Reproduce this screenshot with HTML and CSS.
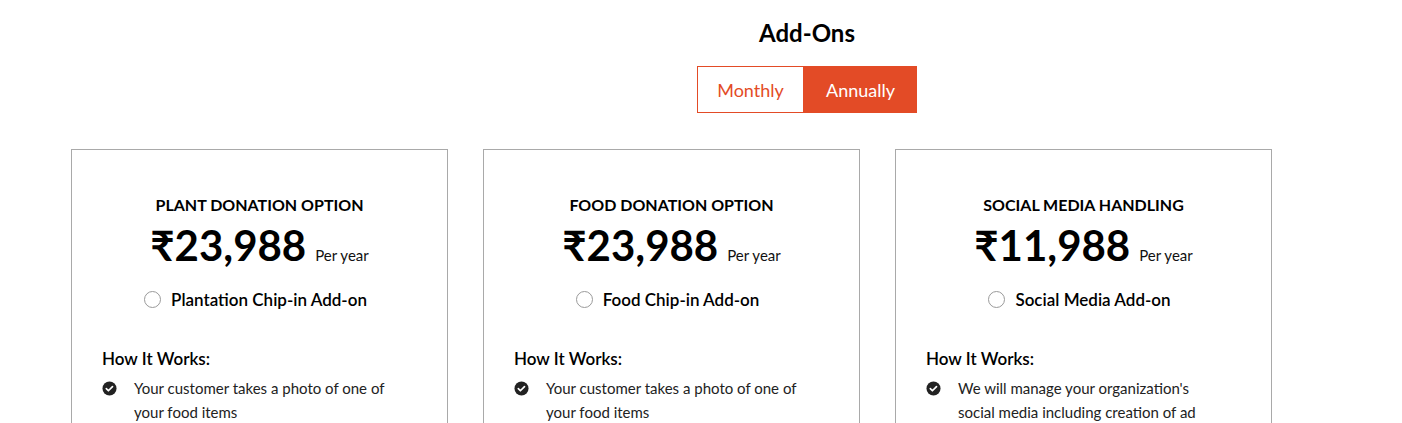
FILE: index.html
```html
<!DOCTYPE html>
<html lang="en">
<head>
<meta charset="utf-8">
<title>Add-Ons</title>
<link rel="stylesheet" href="styles.css">
</head>
<body>
<section class="addons">
  <header class="addons-head">
    <h2 class="addons-title">Add-Ons</h2>
    <div class="toggle">
      <button class="toggle-btn">Monthly</button>
      <button class="toggle-btn active">Annually</button>
    </div>
  </header>
  <div class="cards">
    <article class="card">
      <h3 class="card-title">PLANT DONATION OPTION</h3>
      <div class="price"><span class="amount">₹23,988</span><span class="period">Per year</span></div>
      <label class="option"><span class="radio"></span>Plantation Chip-in Add-on</label>
      <h4 class="how">How It Works:</h4>
      <ul class="steps">
        <li><svg class="check" viewBox="0 0 16 16"><circle cx="8" cy="8" r="7.5" fill="#222"/><path d="M4.6 8.2l2.2 2.2 4.4-4.4" fill="none" stroke="#fff" stroke-width="1.8" stroke-linecap="round" stroke-linejoin="round"/></svg><span>Your customer takes a photo of one of your food items</span></li>
      </ul>
    </article>
    <article class="card">
      <h3 class="card-title">FOOD DONATION OPTION</h3>
      <div class="price"><span class="amount">₹23,988</span><span class="period">Per year</span></div>
      <label class="option"><span class="radio"></span>Food Chip-in Add-on</label>
      <h4 class="how">How It Works:</h4>
      <ul class="steps">
        <li><svg class="check" viewBox="0 0 16 16"><circle cx="8" cy="8" r="7.5" fill="#222"/><path d="M4.6 8.2l2.2 2.2 4.4-4.4" fill="none" stroke="#fff" stroke-width="1.8" stroke-linecap="round" stroke-linejoin="round"/></svg><span>Your customer takes a photo of one of your food items</span></li>
      </ul>
    </article>
    <article class="card">
      <h3 class="card-title">SOCIAL MEDIA HANDLING</h3>
      <div class="price"><span class="amount">₹11,988</span><span class="period">Per year</span></div>
      <label class="option"><span class="radio"></span>Social Media Add-on</label>
      <h4 class="how">How It Works:</h4>
      <ul class="steps">
        <li><svg class="check" viewBox="0 0 16 16"><circle cx="8" cy="8" r="7.5" fill="#222"/><path d="M4.6 8.2l2.2 2.2 4.4-4.4" fill="none" stroke="#fff" stroke-width="1.8" stroke-linecap="round" stroke-linejoin="round"/></svg><span>We will manage your organization's social media including creation of ad posts and stories</span></li>
      </ul>
    </article>
  </div>
</section>
</body>
</html>
```

FILE: styles.css
```css
* { box-sizing: border-box; }
html, body { margin: 0; padding: 0; background: #fff; }
body {
  font-family: "Source Sans Pro", Lato, "Liberation Sans", sans-serif;
  color: #111;
}
.addons-head {
  padding-left: 212px;
  padding-top: 18px;
  display: flex;
  flex-direction: column;
  align-items: center;
}
.addons-title {
  margin: 0;
  font-size: 24px;
  line-height: 30px;
  font-weight: 700;
  color: #000;
}
.toggle {
  display: flex;
  margin-top: 18px;
}
.toggle-btn {
  font-family: inherit;
  font-size: 18px;
  height: 47px;
  border: 1px solid #e34b26;
  background: #fff;
  color: #e34b26;
  padding: 0;
  width: 107px;
  cursor: pointer;
}
.toggle-btn.active {
  background: #e34b26;
  color: #fff;
  width: 113px;
}
.cards {
  display: flex;
  gap: 35px;
  padding-left: 71px;
  margin-top: 36px;
}
.card {
  width: 377px;
  height: 274px;
  overflow: hidden;
  border: 1px solid #a9a9a9;
  border-bottom: none;
  padding: 45px 30px 0;
}
.card-title {
  margin: 0;
  text-align: center;
  font-size: 16px;
  line-height: 20px;
  font-weight: 700;
  color: #000;
}
.price {
  display: flex;
  justify-content: center;
  align-items: baseline;
  margin-top: 5px;
}
.amount {
  font-size: 42px;
  line-height: 50px;
  font-weight: 700;
  color: #000;
}
.period {
  font-size: 15px;
  margin-left: 9px;
  color: #111;
}
.option {
  display: flex;
  align-items: center;
  justify-content: center;
  margin-top: 19px;
  padding-right: 8px;
  font-size: 17px;
  font-weight: 600;
  color: #000;
  gap: 10px;
}
.radio {
  width: 17px;
  height: 17px;
  border: 1px solid #9a9a9a;
  border-radius: 50%;
  display: inline-block;
}
.how {
  margin: 38px 0 0;
  font-size: 17px;
  line-height: 22px;
  font-weight: 600;
  color: #000;
}
.steps {
  list-style: none;
  margin: 6px 0 0;
  padding: 0;
}
.steps li {
  display: flex;
  align-items: flex-start;
  font-size: 15px;
  line-height: 24px;
  color: #222;
}
.check {
  width: 15px;
  height: 15px;
  flex: none;
  margin-top: 5px;
  margin-right: 17px;
}
.steps span { max-width: 260px; }
```
